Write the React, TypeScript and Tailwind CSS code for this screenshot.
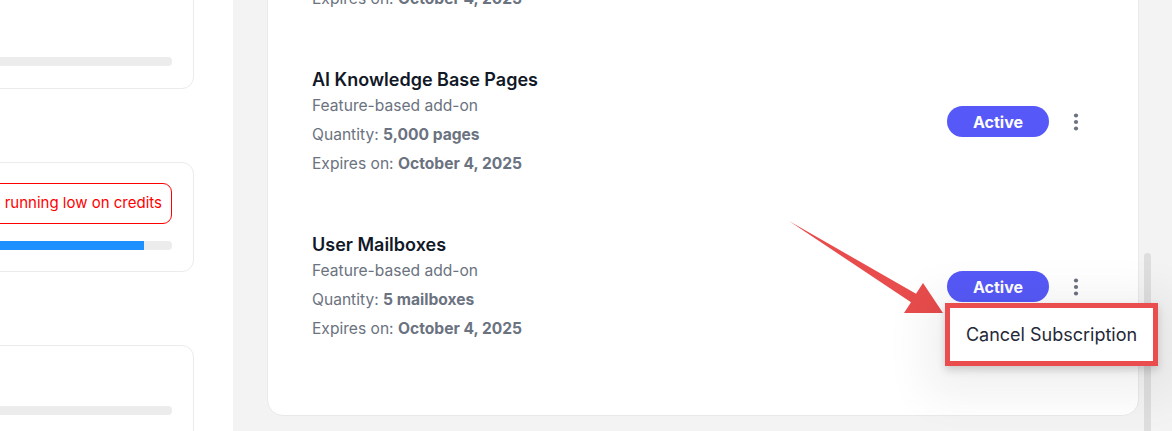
import React from "react";

type Item = { title: string; qty: string };

const items: Item[] = [
  { title: "AI Agent Conversations", qty: "1,000 conversations" },
  { title: "AI Knowledge Base Pages", qty: "5,000 pages" },
  { title: "User Mailboxes", qty: "5 mailboxes" },
];

function Dots() {
  return (
    <svg width="24" height="24" viewBox="0 0 24 24" className="block">
      <circle cx="12" cy="5.5" r="2.1" fill="#6b7280" />
      <circle cx="12" cy="12" r="2.1" fill="#6b7280" />
      <circle cx="12" cy="18.5" r="2.1" fill="#6b7280" />
    </svg>
  );
}

function Row({ item, menu }: { item: Item; menu?: boolean }) {
  return (
    <div className="flex h-[165px] items-center justify-between">
      <div className="flex flex-col pb-[4px]">
        <div className="text-[18px] font-semibold leading-[28px] text-[#111827]">{item.title}</div>
        <div className="mt-[2px] text-[15.6px] leading-[20px] text-[#6b7280]">Feature-based add-on</div>
        <div className="mt-[9px] text-[15.6px] leading-[20px] text-[#6b7280]">
          Quantity: <span className="font-bold">{item.qty}</span>
        </div>
        <div className="mt-[9px] text-[15.6px] leading-[20px] text-[#6b7280]">
          Expires on: <span className="font-bold">October 4, 2025</span>
        </div>
      </div>
      <div className="flex items-center gap-[15px]">
        <div className="flex h-[31px] w-[102px] items-center justify-center rounded-full bg-[#5659f7] text-[16px] font-bold text-white">
          Active
        </div>
        <div className="relative h-[24px] w-[24px]">
          <Dots />
          {menu && (
            <div className="absolute right-[-70px] top-[28px] z-10 flex h-[63px] w-[213px] items-center justify-center border-[5px] border-[#e94d4d] bg-white text-[18px] text-[#1f2937] shadow-[0_4px_8px_rgba(0,0,0,0.16),0_10px_44px_20px_rgba(0,0,0,0.06)]">
              Cancel Subscription
            </div>
          )}
        </div>
      </div>
    </div>
  );
}

export default function App() {
  return (
    <div className="relative flex h-[431px] w-[1172px] overflow-hidden font-[Inter,sans-serif]">
      <aside className="flex w-[233px] shrink-0 flex-col items-end overflow-hidden bg-white pr-[39px]">
        <div className="-mt-[31px] flex h-[120px] w-[260px] shrink-0 flex-col justify-end rounded-[12px] border border-[#ebebee] px-[21px] pb-[22px]">
          <div className="h-[9px] w-full rounded-[4px] bg-[#ececec]" />
        </div>
        <div className="mt-[73px] flex w-[260px] shrink-0 flex-col rounded-[12px] border border-[#ebebee] px-[21px] pb-[21px] pt-[20px]">
          <div className="flex h-[41px] items-center justify-end whitespace-nowrap rounded-[9px] border border-[#ff0000] pr-[9px] text-[15px] text-[#ff0000]">
            You&apos;re running low on credits
          </div>
          <div className="mt-[17px] h-[9px] w-full overflow-hidden rounded-[4px] bg-[#ececec]">
            <div className="h-full w-[188px] bg-[#1e90ff]" />
          </div>
        </div>
        <div className="mt-[73px] flex h-[120px] w-[260px] shrink-0 flex-col rounded-[12px] border border-[#ebebee] px-[21px] pt-[60px]">
          <div className="h-[9px] w-full rounded-[4px] bg-[#ececec]" />
        </div>
      </aside>

      <main className="relative flex-1 overflow-hidden bg-[#f3f3f4] pl-[34px] pr-[33px]">
        <div className="-mt-[127px] rounded-[16px] border border-[#e9e9eb] bg-white pb-[46px] pl-[44px] pr-[50px]">
          {items.map((it, i) => (
            <Row key={it.title} item={it} menu={i === 2} />
          ))}
        </div>
        <div className="absolute left-[911px] top-[253px] h-[200px] w-[7px] rounded-full bg-[#dedede]" />
      </main>

      <svg className="pointer-events-none absolute left-0 top-0" width="1172" height="431" viewBox="0 0 1172 431">
        <polygon
          points="789,221 916,293.7 923,283 943,313 904,313 911,302.3"
          fill="#e84c4c"
        />
      </svg>
    </div>
  );
}
